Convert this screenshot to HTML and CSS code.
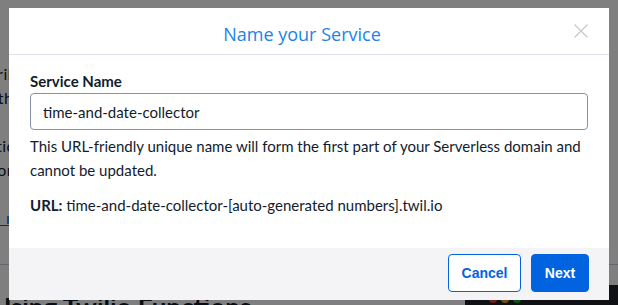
FILE: index.html
```html
<!DOCTYPE html>
<html>
<head>
<meta charset="utf-8">
<link rel="stylesheet" href="styles.css">
</head>
<body>
<div class="page">
  <div class="page-main">
    <p class="bg-line">Describe the service and use it to create new functions. Write code</p>
    <p class="bg-line">with the new editor and deploy to the domain.</p>
    <p class="bg-line gap">Functions can be called from webhooks and each one can be grouped as</p>
    <p class="bg-line">environment variables for your project.</p>
    <p class="bg-line gap"><a class="bg-link" href="#">Learn more about Serverless</a></p>
    <hr class="bg-rule">
    <div class="bg-bottom">
      <h2 class="bg-heading">Using Twilio Functions</h2>
      <div class="bg-code"><span class="dot r"></span><span class="dot y"></span><span class="dot g"></span></div>
    </div>
  </div>
</div>
<div class="overlay"></div>
<div class="modal">
  <div class="modal-header">
    <h1 class="modal-title">Name your Service</h1>
    <button class="close" aria-label="Close">
      <svg width="16" height="16" viewBox="0 0 16 16"><path d="M1.5 1.5 L14.5 14.5 M14.5 1.5 L1.5 14.5" stroke="#c6c9cf" stroke-width="1.3" fill="none"/></svg>
    </button>
  </div>
  <div class="modal-body">
    <label class="label">Service Name</label>
    <div class="input">time-and-date-collector</div>
    <p class="help">This URL-friendly unique name will form the first part of your Serverless domain and cannot be updated.</p>
    <p class="url"><strong>URL:</strong> time-and-date-collector-[auto-generated numbers].twil.io</p>
  </div>
  <div class="modal-footer">
    <button class="btn btn-secondary">Cancel</button>
    <button class="btn btn-primary">Next</button>
  </div>
</div>
</body>
</html>
```

FILE: styles.css
```css
* { box-sizing: border-box; }
html, body { margin: 0; padding: 0; }
body {
  width: 618px;
  height: 305px;
  overflow: hidden;
  background: #ffffff;
  font-family: Lato, "Open Sans", sans-serif;
  color: #121c2d;
}
.page { padding: 62px 0 0 0; }
.bg-line {
  margin: 0 0 0 -40px;
  font-size: 16px;
  line-height: 24px;
  white-space: nowrap;
  letter-spacing: 0.5px;
}
.bg-line.gap { margin-top: 24px; }
.bg-link { color: #0263e0; }
.bg-rule { border: 0; border-top: 1px solid #cacdd8; margin: 34px 0 0 0; }
.bg-bottom { display: flex; justify-content: space-between; margin-top: 20px; }
.bg-heading { margin: 6px 0 0 -8px; font-size: 26px; line-height: 32px; font-weight: 700; }
.bg-code { width: 153px; height: 40px; background: #1f2328; padding: 10px 24px; display: flex; gap: 4px; }
.dot { width: 8px; height: 8px; border-radius: 50%; }
.dot.r { background: #e0443e; }
.dot.y { background: #dea123; }
.dot.g { background: #1aab29; }

.overlay {
  position: fixed;
  inset: 0;
  background: rgba(0, 0, 0, 0.5);
}
.modal {
  position: fixed;
  left: 9px;
  top: 8px;
  width: 600px;
  height: 292px;
  background: #ffffff;
  display: flex;
  flex-direction: column;
}
.modal-header {
  height: 47px;
  border-bottom: 1px solid #e1e3ea;
  display: flex;
  align-items: center;
  justify-content: center;
  padding: 6px 14px 0 0;
  position: relative;
}
.modal-title {
  margin: 0;
  font-family: "Open Sans", sans-serif;
  font-weight: 400;
  font-size: 18px;
  line-height: 24px;
  color: #1a84e8;
}
.close {
  position: absolute;
  right: 20px;
  top: 15px;
  background: none;
  border: 0;
  padding: 0;
  width: 16px;
  height: 16px;
  display: flex;
}
.modal-body {
  flex: 1;
  padding: 16px 21px 0 21px;
}
.label {
  display: block;
  font-weight: 700;
  font-size: 15px;
  line-height: 20px;
  margin-bottom: 2px;
}
.input {
  height: 37px;
  border: 1px solid #8891aa;
  border-radius: 4px;
  padding: 0 12px;
  display: flex;
  align-items: center;
  font-size: 15px;
}
.help {
  margin: 4px 0 0 0;
  font-size: 15px;
  line-height: 24px;
}
.url {
  margin: 12px 0 0 0;
  font-size: 15px;
  line-height: 22px;
}
.url strong { font-weight: 700; }
.modal-footer {
  height: 52px;
  background: #f4f4f6;
  display: flex;
  justify-content: flex-end;
  align-items: flex-start;
  gap: 10px;
  padding: 6px 20px 0 0;
}
.btn {
  height: 38px;
  border-radius: 4px;
  font-family: "Liberation Sans", Arial, sans-serif;
  font-weight: 700;
  font-size: 14px;
  padding: 0 12px;
  cursor: pointer;
}
.btn-secondary {
  width: 73px;
  background: #ffffff;
  border: 1px solid #0263e0;
  color: #0263e0;
}
.btn-primary {
  width: 58px;
  background: #0263e0;
  border: 1px solid #0263e0;
  color: #ffffff;
}
```
